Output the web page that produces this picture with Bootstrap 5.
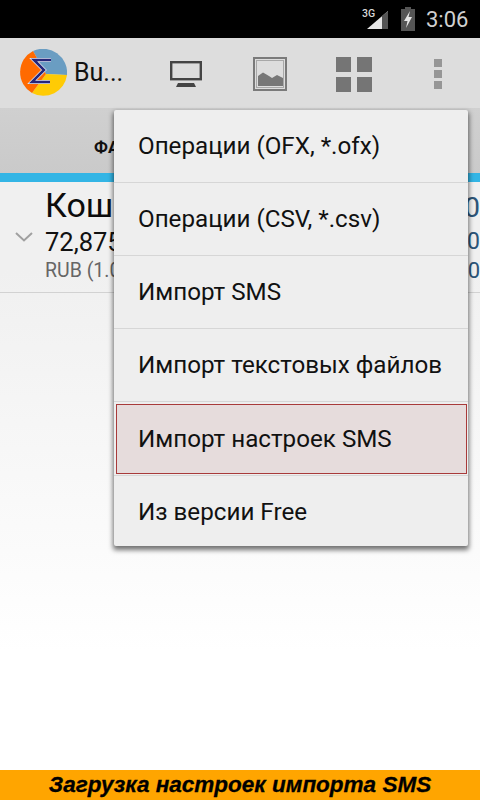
<!DOCTYPE html>
<html lang="ru">
<head>
<meta charset="utf-8">
<title>Import</title>
<link href="https://cdn.jsdelivr.net/npm/bootstrap@5.3.0/dist/css/bootstrap.min.css" rel="stylesheet">
<style>
html,body{height:800px;width:480px;overflow:hidden;margin:0}
body{font-family:Roboto,"Liberation Sans",sans-serif;background:#fff;color:#111}
.shell{height:800px;position:relative}
.stat{height:38px;background:#000;color:#d0d0d0}
.sig{margin-right:13px}
.clock{font-size:22px;line-height:39px;width:54px;margin-left:11px}
.abar{height:70px;background:#dddddd}
.logo{margin-left:19px}
.brand-txt{font-size:25px;color:#111;margin-left:7px;line-height:70px;width:55px}
.act{width:84px;margin-top:2px}
.act-first{margin-left:15px}
.tabs{height:65px;background:linear-gradient(#d0d0d0,#cacaca);padding-left:94px;padding-top:29px;font-weight:700;font-size:17px;line-height:20px;color:#111}
.blue{height:9px;background:#33b5e5}
.paper{height:588px;background:linear-gradient(#f0f0f0 0,#f0f0f0 15%,#fff 80%)}
.acct{height:111px;border-bottom:1px solid #d2d2d2;padding-left:45px;position:relative}
.a1{font-size:34px;line-height:40px;color:#0c0c0c;padding-top:3px;height:43px;white-space:nowrap}
.a2{font-size:25.5px;line-height:34px;color:#111;height:34px}
.a3{font-size:19.5px;line-height:24px;color:#666}
.chev{position:absolute;left:15px;top:50px}
.zero{position:absolute;right:0;color:#2c5578;line-height:1}
.z1{top:12px;font-size:28px}.z2{top:48px;font-size:23px}.z3{top:78px;font-size:22px}
.banner{height:30px;background:#ffa500;font-family:"Liberation Sans",sans-serif;font-style:italic;font-weight:700;font-size:22.5px;line-height:29px;color:#000;text-align:center;white-space:nowrap;-webkit-text-stroke:.3px #000}
.drop{position:absolute;left:114px;top:110px;width:354px;height:436px;background:#eeeeee;box-shadow:0 3px 5px 1px rgba(0,0,0,.55);border-radius:2px}
.itm{height:73px;line-height:73px;padding-left:24px;font-size:24.2px;color:#111;border-bottom:1px solid #d6d6d6;white-space:nowrap}
.itm:last-child{border-bottom:0}
.itm-on{height:70px;margin:2px 1px 2px 2px;line-height:68px;padding-left:21px;background:#e6dcdc;border:1px solid #a83a3a}
.sep{height:1px;background:#d6d6d6;margin-top:-1px}
</style>
</head>
<body>
<div class="shell d-flex flex-column">
  <div class="stat d-flex justify-content-end align-items-center flex-shrink-0">
    <svg class="sig" width="28" height="26" viewBox="0 0 28 26"><text x="2" y="11" font-family="Roboto,sans-serif" font-size="10.5" font-weight="500" fill="#d8d8d8">3G</text><polygon points="7,23 28,5 28,23" fill="#e6e6e6"/><polygon points="22,10 28,5 28,23 22,23" fill="#555"/></svg>
    <svg width="14" height="24" viewBox="0 0 14 24"><rect x="0" y="2" width="14" height="22" fill="#555"/><rect x="4" y="0" width="6" height="2" fill="#555"/><polygon points="9,4 3,14 6.500,14 5,21 11,10 7.500,10" fill="#e6e6e6"/></svg>
    <div class="clock">3:06</div>
  </div>
  <div class="abar d-flex align-items-center flex-shrink-0">
    <svg class="logo flex-shrink-0" width="48" height="48" viewBox="0 0 48 48">
      <path d="M27 25 L14 2 A24 24 0 0 1 48 26 Z" fill="#6a9dc2"/>
      <path d="M27 25 L48 26 A24 24 0 0 1 13 44 Z" fill="#ffcb05"/>
      <path d="M27 25 L13 44 A24 24 0 0 1 14 2 Z" fill="#ff6a00"/>
      <path d="M32 11 H15 L25 21 L13 33 H31" fill="none" stroke="#dfe6f2" stroke-width="4"/>
      <path d="M32 11 H15 L25 21 L13 33 H31" fill="none" stroke="#26267a" stroke-width="2.500"/>
    </svg>
    <div class="brand-txt">Bu...</div>
    <div class="act act-first d-flex justify-content-center flex-shrink-0">
      <svg width="32" height="26" viewBox="0 0 32 26"><rect x="1.200" y="1.200" width="29.600" height="17" fill="none" stroke="#444" stroke-width="2.400"/><polygon points="6,26 8,22 24,22 26,26" fill="#444"/></svg>
    </div>
    <div class="act d-flex justify-content-center flex-shrink-0">
      <svg width="34" height="34" viewBox="0 0 34 34"><rect x="1" y="1" width="32" height="32" fill="none" stroke="#7a7a7a" stroke-width="2"/><rect x="3.500" y="3.500" width="27" height="27" fill="none" stroke="#a8a8a8" stroke-width="1"/><path d="M5 29 V19 L10 15.500 L16 19 L19 21 L24 18 L30 21 V29 Z" fill="#777"/></svg>
    </div>
    <div class="act d-flex justify-content-center flex-shrink-0">
      <svg width="36" height="35" viewBox="0 0 36 35"><g fill="#757575"><rect width="15" height="15"/><rect x="21" width="15" height="15"/><rect y="20" width="15" height="15"/><rect x="21" y="20" width="15" height="15"/></g></svg>
    </div>
    <div class="act d-flex justify-content-center flex-shrink-0">
      <svg width="8" height="30" viewBox="0 0 8 30"><g fill="#969696"><rect width="8" height="8"/><rect y="11" width="8" height="8"/><rect y="22" width="8" height="8"/></g></svg>
    </div>
  </div>
  <div class="tabs flex-shrink-0">ФА</div>
  <div class="blue flex-shrink-0"></div>
  <div class="paper flex-shrink-0">
    <div class="acct">
      <svg class="chev" width="18" height="10" viewBox="0 0 18 10"><path d="M1 1 L9 8.500 L17 1" fill="none" stroke="#a0a0a0" stroke-width="2"/></svg>
      <div class="a1">Кошелек</div>
      <div class="a2">72,875.00</div>
      <div class="a3">RUB (1.00)</div>
      <span class="zero z1">0</span><span class="zero z2">0</span><span class="zero z3">0</span>
    </div>
  </div>
  <div class="banner flex-shrink-0">Загрузка настроек импорта SMS</div>
  <div class="drop">
    <div class="itm">Операции (OFX, *.ofx)</div>
    <div class="itm">Операции (CSV, *.csv)</div>
    <div class="itm">Импорт SMS</div>
    <div class="itm">Импорт текстовых файлов</div>
    <div class="sep"></div>
    <div class="itm itm-on">Импорт настроек SMS</div>
    <div class="sep"></div>
    <div class="itm">Из версии Free</div>
  </div>
</div>
<script src="https://cdn.jsdelivr.net/npm/bootstrap@5.3.0/dist/js/bootstrap.bundle.min.js"></script>
</body>
</html>
